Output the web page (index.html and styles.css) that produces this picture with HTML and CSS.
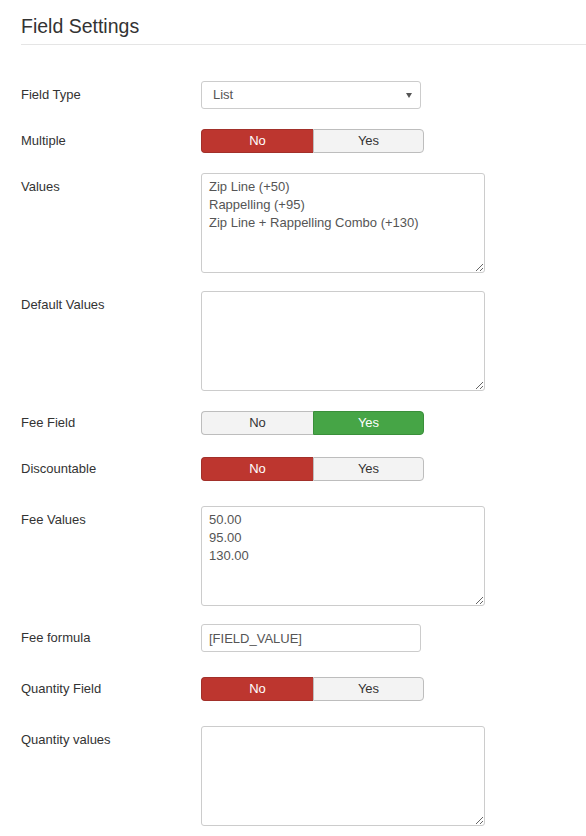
FILE: index.html
```html
<!DOCTYPE html>
<html>
<head>
<meta charset="utf-8">
<link rel="stylesheet" href="styles.css">
</head>
<body>
<div class="page">
  <h2 class="legend">Field Settings</h2>
  <div class="form">
    <div class="row">
      <div class="label">Field Type</div>
      <div class="controls"><div class="select">List<span class="caret"></span></div></div>
    </div>
    <div class="row">
      <div class="label">Multiple</div>
      <div class="controls toggle-wrap"><div class="toggle"><span class="opt no active">No</span><span class="opt yes">Yes</span></div></div>
    </div>
    <div class="row">
      <div class="label">Values</div>
      <div class="controls"><textarea class="area">Zip Line (+50)
Rappelling (+95)
Zip Line + Rappelling Combo (+130)</textarea></div>
    </div>
    <div class="row">
      <div class="label">Default Values</div>
      <div class="controls"><textarea class="area"></textarea></div>
    </div>
    <div class="row">
      <div class="label">Fee Field</div>
      <div class="controls toggle-wrap"><div class="toggle"><span class="opt no">No</span><span class="opt yes active">Yes</span></div></div>
    </div>
    <div class="row row-wide">
      <div class="label">Discountable</div>
      <div class="controls toggle-wrap"><div class="toggle"><span class="opt no active">No</span><span class="opt yes">Yes</span></div></div>
    </div>
    <div class="row">
      <div class="label">Fee Values</div>
      <div class="controls"><textarea class="area">50.00
95.00
130.00</textarea></div>
    </div>
    <div class="row row-wide">
      <div class="label">Fee formula</div>
      <div class="controls"><input class="input" type="text" value="[FIELD_VALUE]"></div>
    </div>
    <div class="row row-wide">
      <div class="label">Quantity Field</div>
      <div class="controls toggle-wrap"><div class="toggle"><span class="opt no active">No</span><span class="opt yes">Yes</span></div></div>
    </div>
    <div class="row">
      <div class="label">Quantity values</div>
      <div class="controls"><textarea class="area"></textarea></div>
    </div>
  </div>
</div>
</body>
</html>
```

FILE: styles.css
```css
html, body {
  margin: 0;
  padding: 0;
  background: #fff;
}
body {
  font-family: "Liberation Sans", Arial, sans-serif;
  font-size: 13px;
  line-height: 18px;
  color: #333;
}
.page {
  padding: 8px 0 0 21px;
}
.legend {
  margin: 0 0 36px 0;
  padding: 0;
  font-size: 19.5px;
  font-weight: normal;
  line-height: 36px;
  color: #333;
  border-bottom: 1px solid #e5e5e5;
}
.row {
  display: grid;
  grid-template-columns: 180px 1fr;
  margin-bottom: 18px;
}
.row-wide {
  margin-bottom: 23px;
}
.label {
  padding-top: 5px;
  line-height: 18px;
  color: #333;
}
.controls {
  display: flex;
  align-items: flex-start;
}
.toggle-wrap {
  padding: 2px 0;
}
.select {
  position: relative;
  box-sizing: border-box;
  width: 220px;
  height: 28px;
  padding: 4px 11px;
  border: 1px solid #ccc;
  border-radius: 3px;
  color: #555;
  background: #fff;
}
.caret {
  position: absolute;
  right: 8px;
  top: 11px;
  width: 0;
  height: 0;
  border-left: 3px solid transparent;
  border-right: 3px solid transparent;
  border-top: 5px solid #555;
}
.toggle {
  display: flex;
  width: 223px;
  height: 24px;
}
.opt {
  box-sizing: border-box;
  height: 24px;
  line-height: 22px;
  text-align: center;
  border: 1px solid #bdbdbd;
  background: #f3f3f3;
  color: #333;
}
.opt.no {
  width: 112px;
  border-radius: 4px 0 0 4px;
  border-right: none;
}
.opt.yes {
  width: 111px;
  border-radius: 0 4px 4px 0;
}
.opt.no.active {
  background: #bd362f;
  border-color: #a2302a;
  color: #fff;
}
.opt.yes.active {
  background: #46a546;
  border-color: #3a8f3a;
  color: #fff;
}
.opt.no:not(.active) + .opt.yes.active {
  border-left: 1px solid #3a8f3a;
}
.area {
  display: block;
  box-sizing: border-box;
  width: 284px;
  height: 100px;
  margin: 0;
  padding: 4px 7px;
  border: 1px solid #ccc;
  border-radius: 3px;
  font-family: "Liberation Sans", Arial, sans-serif;
  font-size: 13px;
  line-height: 18px;
  color: #555;
  background: #fff;
  resize: both;
}
.input {
  display: block;
  box-sizing: border-box;
  width: 220px;
  height: 28px;
  margin: 0;
  padding: 4px 7px;
  border: 1px solid #ccc;
  border-radius: 3px;
  font-family: "Liberation Sans", Arial, sans-serif;
  font-size: 13px;
  line-height: 18px;
  color: #555;
  background: #fff;
}
```
